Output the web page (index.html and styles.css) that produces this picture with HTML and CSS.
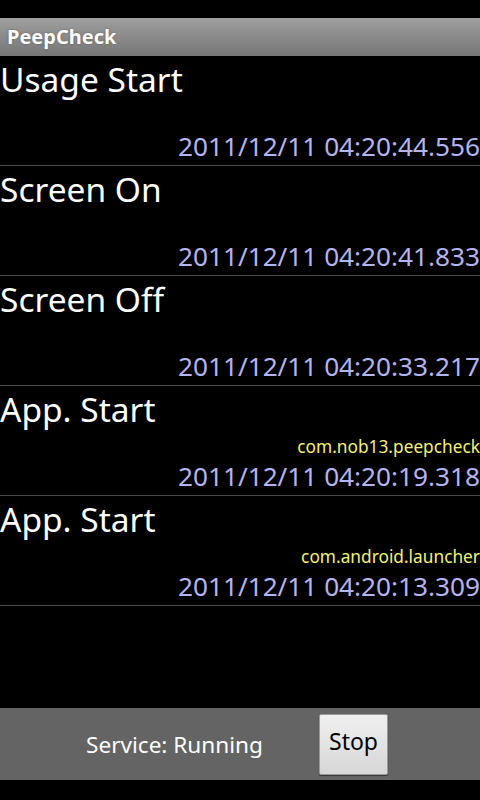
FILE: index.html
```html
<!DOCTYPE html>
<html lang="en">

<head>
    <meta charset="UTF-8">
    <meta name="viewport" content="width=device-width, initial-scale=1.0">
    <title>PeepCheck</title>
    <link rel="stylesheet" href="styles.css">
</head>

<body>
    <div class="status__bar"></div>
    <div class="title__bar">PeepCheck</div>
    <ul class="log">
        <li class="log__item">
            <span class="log__event">Usage Start</span>
            <span class="log__time">2011/12/11 04:20:44.556</span>
        </li>
        <li class="log__item">
            <span class="log__event">Screen On</span>
            <span class="log__time">2011/12/11 04:20:41.833</span>
        </li>
        <li class="log__item">
            <span class="log__event">Screen Off</span>
            <span class="log__time">2011/12/11 04:20:33.217</span>
        </li>
        <li class="log__item">
            <span class="log__event">App. Start</span>
            <span class="log__package">com.nob13.peepcheck</span>
            <span class="log__time">2011/12/11 04:20:19.318</span>
        </li>
        <li class="log__item">
            <span class="log__event">App. Start</span>
            <span class="log__package">com.android.launcher</span>
            <span class="log__time">2011/12/11 04:20:13.309</span>
        </li>
    </ul>
    <div class="service__bar">
        <span class="service__status">Service: Running</span>
        <button class="service__btn">Stop</button>
    </div>
</body>

</html>
```

FILE: styles.css
```css
* {
    margin: 0;
    padding: 0;
    box-sizing: border-box;
}

body {
    width: 480px;
    height: 800px;
    background: #000;
    color: #fff;
    font-family: "Noto Sans", "Open Sans", sans-serif;
    display: flex;
    flex-direction: column;
    overflow: hidden;
}

.status__bar {
    height: 18px;
    background: #000;
}

.title__bar {
    height: 38px;
    background-image: linear-gradient(to bottom, #a0a0a0 0%, #8a8a8a 50%, #767676 100%);
    font-weight: bold;
    font-size: 20px;
    line-height: 38px;
    padding-left: 7px;
    text-shadow: 0 0 2px #555;
}

.log {
    list-style: none;
    flex: 1;
}

.log__item {
    height: 110px;
    border-bottom: 1px solid #4a4a4a;
    display: flex;
    flex-direction: column;
}

.log__event {
    font-size: 33.5px;
    line-height: 47px;
    flex: 1;
}

.log__package {
    align-self: flex-end;
    color: #f2f27a;
    font-size: 17.3px;
    line-height: 20px;
    margin-bottom: 1px;
}

.log__time {
    align-self: flex-end;
    color: #b4b4f0;
    font-size: 26.2px;
    line-height: 36px;
    margin-bottom: 1px;
}

.service__bar {
    height: 72px;
    margin-bottom: 20px;
    background: #646464;
    display: flex;
    align-items: center;
    padding-left: 86px;
}

.service__status {
    font-size: 22.6px;
    width: 233px;
}

.service__btn {
    width: 69px;
    height: 61px;
    padding-bottom: 6px;
    border: 1px solid #9a9a9a;
    border-radius: 2px;
    background-image: linear-gradient(to bottom, #f0f0f0 0%, #d6d6d6 100%);
    font-family: "Noto Sans", "Open Sans", sans-serif;
    font-size: 23px;
    color: #000;
    box-shadow: 0 1px 1px #333;
}
```
